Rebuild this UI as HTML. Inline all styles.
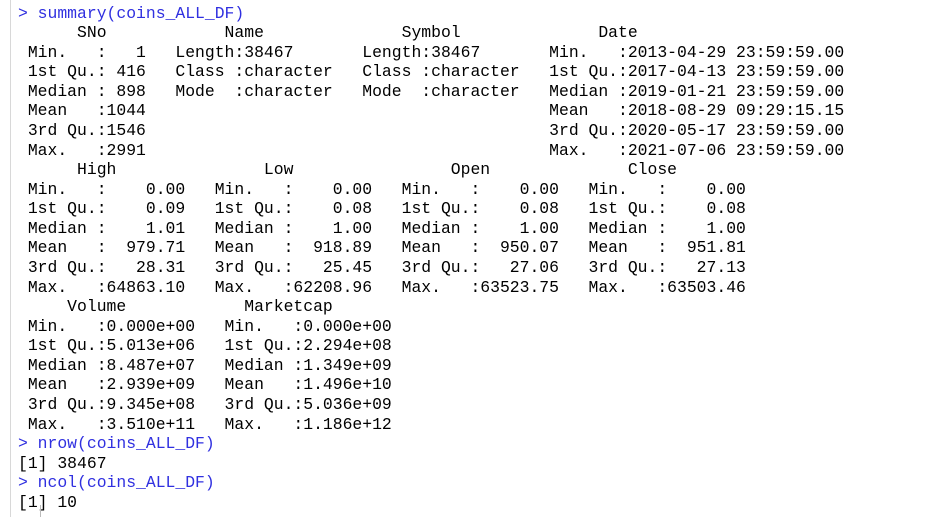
<!DOCTYPE html>
<html><head><meta charset="utf-8"><style>
html,body{margin:0;padding:0;background:#fff;width:940px;height:517px;overflow:hidden}
.b{position:absolute;left:10px;top:0;width:1px;height:517px;background:#d8d8d8}
pre{position:absolute;left:18px;top:3.5px;margin:0;font-family:"Liberation Mono",monospace;font-size:16.4px;line-height:19.58px;color:#000}
.c{color:#3030e0}
.k{position:absolute;left:40px;top:505px;width:1px;height:12px;background:#bbb}
</style></head><body>
<div class="b"></div>
<pre><span class="c">&gt; summary(coins_ALL_DF)</span>
      SNo            Name              Symbol              Date                    
 Min.   :   1   Length:38467       Length:38467       Min.   :2013-04-29 23:59:59.00  
 1st Qu.: 416   Class :character   Class :character   1st Qu.:2017-04-13 23:59:59.00  
 Median : 898   Mode  :character   Mode  :character   Median :2019-01-21 23:59:59.00  
 Mean   :1044                                         Mean   :2018-08-29 09:29:15.15  
 3rd Qu.:1546                                         3rd Qu.:2020-05-17 23:59:59.00  
 Max.   :2991                                         Max.   :2021-07-06 23:59:59.00  
      High               Low                Open              Close         
 Min.   :    0.00   Min.   :    0.00   Min.   :    0.00   Min.   :    0.00  
 1st Qu.:    0.09   1st Qu.:    0.08   1st Qu.:    0.08   1st Qu.:    0.08  
 Median :    1.01   Median :    1.00   Median :    1.00   Median :    1.00  
 Mean   :  979.71   Mean   :  918.89   Mean   :  950.07   Mean   :  951.81  
 3rd Qu.:   28.31   3rd Qu.:   25.45   3rd Qu.:   27.06   3rd Qu.:   27.13  
 Max.   :64863.10   Max.   :62208.96   Max.   :63523.75   Max.   :63503.46  
     Volume            Marketcap        
 Min.   :0.000e+00   Min.   :0.000e+00  
 1st Qu.:5.013e+06   1st Qu.:2.294e+08  
 Median :8.487e+07   Median :1.349e+09  
 Mean   :2.939e+09   Mean   :1.496e+10  
 3rd Qu.:9.345e+08   3rd Qu.:5.036e+09  
 Max.   :3.510e+11   Max.   :1.186e+12  
<span class="c">&gt; nrow(coins_ALL_DF)</span>
[1] 38467
<span class="c">&gt; ncol(coins_ALL_DF)</span>
[1] 10</pre>
<div class="k"></div>
</body></html>
